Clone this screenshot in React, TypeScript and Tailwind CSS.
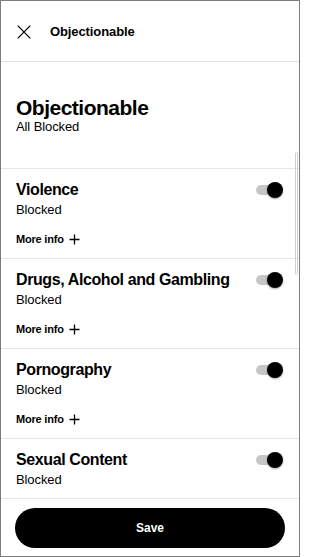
import React from "react";

const CATEGORIES = [
  { name: "Violence", status: "Blocked" },
  { name: "Drugs, Alcohol and Gambling", status: "Blocked" },
  { name: "Pornography", status: "Blocked" },
  { name: "Sexual Content", status: "Blocked" },
];

function Toggle() {
  return (
    <div className="relative w-[27px] h-[16px] shrink-0">
      <div className="absolute left-0 top-[3px] w-[24px] h-[10px] rounded-full bg-[#c6c6c6]" />
      <div className="absolute right-0 top-0 w-[16px] h-[16px] rounded-full bg-black shadow-[0_1px_2px_rgba(0,0,0,0.35)]" />
    </div>
  );
}

function PlusIcon() {
  return (
    <svg width="11" height="11" viewBox="0 0 11 11" className="shrink-0">
      <path d="M5.5 0.5v10M0.5 5.5h10" stroke="#000" strokeWidth="1.3" fill="none" />
    </svg>
  );
}

export default function App() {
  return (
    <div
      className="relative w-[300px] h-[557px] border border-[#7d7d7d] bg-white flex flex-col overflow-hidden text-black"
      style={{ fontFamily: '"Liberation Sans", Arial, sans-serif' }}
    >
      {/* Header */}
      <div className="h-[61px] shrink-0 border-b border-[#e2e2e2] flex items-center pl-[16px] pt-[1px]">
        <svg width="14" height="14" viewBox="0 0 14 14" className="shrink-0">
          <path d="M0.7 0.7l12.6 12.6M13.3 0.7L0.7 13.3" stroke="#000" strokeWidth="1.2" fill="none" />
        </svg>
        <span className="ml-[19px] text-[13px] leading-[16px] font-bold tracking-[-0.1px]">Objectionable</span>
      </div>

      {/* Scrolling content */}
      <div className="flex-1 overflow-hidden">
        <div className="pl-[15px] pt-[34px] pb-[33px] border-b border-[#e6e6e6]">
          <h1 className="text-[21px] leading-[23px] font-bold tracking-[-0.5px]">Objectionable</h1>
          <p className="text-[13px] leading-[16px] tracking-[-0.1px]">All Blocked</p>
        </div>

        {CATEGORIES.map((c) => (
          <div key={c.name} className="pl-[15px] pr-[16px] pt-[11px] pb-[12px] border-b border-[#e6e6e6]">
            <div className="flex items-center justify-between">
              <h2 className="text-[16px] leading-[20px] font-bold tracking-[-0.4px]">{c.name}</h2>
              <Toggle />
            </div>
            <p className="mt-[2px] text-[13px] leading-[16px] tracking-[-0.1px]">{c.status}</p>
            <button className="mt-[14px] flex items-center gap-[5px] text-[11px] leading-[14px] font-bold tracking-[-0.2px]">
              More info
              <PlusIcon />
            </button>
          </div>
        ))}
      </div>

      {/* Footer */}
      <div className="shrink-0 border-t border-[#e6e6e6] px-[14px] pt-[9px] pb-[8px]">
        <button className="w-full h-[40px] rounded-full bg-black text-white text-[12px] font-bold">
          Save
        </button>
      </div>

      {/* Scrollbar thumb */}
      <div className="absolute right-[1px] top-[151px] w-[3px] h-[123px] rounded-full border border-[#cfcfcf]" />
    </div>
  );
}
